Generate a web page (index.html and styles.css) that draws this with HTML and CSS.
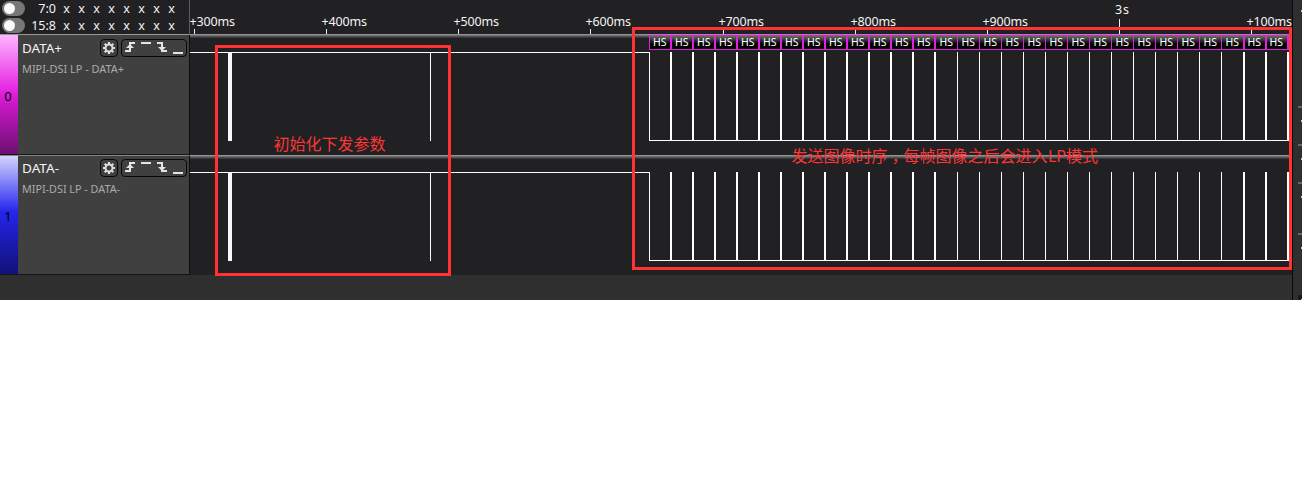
FILE: index.html
```
<!DOCTYPE html>
<html lang="zh">
<head>
<meta charset="utf-8">
<title>Logic analyzer</title>
<link rel="stylesheet" href="styles.css">
</head>
<body>
<svg class="defs" width="0" height="0">
  <defs>
    <g id="gear"><circle cx="6" cy="6" r="3.5" fill="none" stroke="#ddd" stroke-width="2"/><path d="M6 0v2M6 10v2M0 6h2M10 6h2M1.700 1.700l1.500 1.500M8.800 8.800l1.500 1.500M1.700 10.300l1.500-1.500M8.800 3.200l1.500-1.500" stroke="#ddd" stroke-width="2.200" fill="none"/></g>
    <g id="edges" fill="#e4e4e4"><path d="M7 2h6v2H9v8H3v-2h4z"/><path d="M4 8l4-4 4 4zM19 2h10v2H19z"/><path d="M35 2h6v8h4v2h-6V4h-4z"/><path d="M36 7h8l-4 4zM51 12h10v2H51z"/></g>
  </defs>
</svg>
<div class="app">
  <aside class="side">
    <div class="buses">
      <div class="bus"><i class="toggle"></i><span class="range">7:0</span><span class="bits"><b>x</b><b>x</b><b>x</b><b>x</b><b>x</b><b>x</b><b>x</b><b>x</b></span></div>
      <div class="bus"><i class="toggle"></i><span class="range">15:8</span><span class="bits"><b>x</b><b>x</b><b>x</b><b>x</b><b>x</b><b>x</b><b>x</b><b>x</b></span></div>
    </div>
    <div class="channel">
      <div class="index magenta">0</div>
      <div class="info">
        <div class="title"><svg class="name" width="78" height="18"><text x="0" y="14" textLength="40" lengthAdjust="spacingAndGlyphs">DATA+</text></svg><span class="btn gear"><svg width="12" height="12"><use href="#gear"/></svg></span><span class="btn trig"><svg width="64" height="16"><use href="#edges"/></svg></span></div>
        <svg class="sub" width="150" height="18"><text x="0" y="13.500" textLength="102" lengthAdjust="spacingAndGlyphs">MIPI-DSI LP - DATA+</text></svg>
      </div>
    </div>
    <div class="channel">
      <div class="index blue">1</div>
      <div class="info">
        <div class="title"><svg class="name" width="78" height="18"><text x="0" y="14" textLength="37" lengthAdjust="spacingAndGlyphs">DATA-</text></svg><span class="btn gear"><svg width="12" height="12"><use href="#gear"/></svg></span><span class="btn trig"><svg width="64" height="16"><use href="#edges"/></svg></span></div>
        <svg class="sub" width="150" height="18"><text x="0" y="13.500" textLength="98" lengthAdjust="spacingAndGlyphs">MIPI-DSI LP - DATA-</text></svg>
      </div>
    </div>
  </aside>
  <main class="scope">
    <svg id="plot" width="1102" height="275" viewBox="190 0 1102 275"></svg>
  </main>
  <aside class="rail">
    <svg width="9" height="300"><g fill="#666"><path d="M5 106h4v2H5zM5 144h4v2H5zM5 182h4v2H5zM5 233h4v2H5z"/></g><path d="M8 10h1v2H8zM8 120h1v2H8zM8 158h1v2H8zM8 196h1v2H8zM8 247h1v2H8z" fill="#ccc"/><path d="M5 295h4v5H5z" fill="#191919"/><path d="M8 299h1v1H8z" fill="#ddd"/></svg>
  </aside>
  <div class="mark init"><svg width="230" height="225"><text x="55.500" y="101.500" textLength="112">初始化下发参数</text></svg></div>
  <div class="mark video"><svg width="654" height="237"><text y="132"><tspan x="156.500">发送图像时序</tspan><tspan class="comma" x="252.500" y="137" lang="zh-TW">，</tspan><tspan x="268.500" y="132">每帧图像之后会进入</tspan><tspan x="413" textLength="18">LP</tspan><tspan x="431">模式</tspan></text></svg></div>
</div>
<script src="plot.js"></script>
</body>
</html>
```
FILE: styles.css
```
body { margin: 0; background: #fff; font-family: "Noto Sans", sans-serif; font-size: 12.5px; color: #f4f4f4; }
.defs { position: absolute; }
svg { display: block; }
.app { position: relative; display: grid; grid-template-columns: 190px 1102px 10px; width: 1302px; height: 300px; background: #2f2f2f; }
.side { height: 275px; background: #212123; }
.buses { border-right: 1px solid #5c5c5c; border-bottom: 1px solid #999; box-sizing: border-box; height: 35px; }
.bus { display: flex; align-items: center; height: 17px; line-height: 17px; }
.toggle { width: 23px; height: 15px; border-radius: 8px; background: #777; margin-left: 2px; box-sizing: border-box; padding: 2px; }
.toggle::before { content: ""; display: block; width: 11px; height: 11px; border-radius: 50%; background: #fafafa; }
.range { width: 31px; text-align: right; }
.bits { display: grid; grid-template-columns: repeat(8, 15px); margin-left: 3px; text-align: center; }
.bits b { font-weight: normal; font-size: 12.5px; }
.channel { display: flex; height: 120px; box-sizing: border-box; border-bottom: 1px solid #151515; border-right: 1px solid #0c0c0c; }
.channel + .channel { border-top: 1px solid #858585; }
.index { display: flex; align-items: center; justify-content: center; width: 18px; color: #000; font-size: 13px; padding: 2px 2px 0 0; box-sizing: border-box; }
.magenta { background: linear-gradient(#ffb4ff, #e424e2 47%, #d41ad2 53%, #6c0f70); }
.blue { background: linear-gradient(#d4d4ff, #2626ee 47%, #2222e0 53%, #111175); }
.info { flex: 1; background: #404040; padding: 4px 2px 0 4px; }
.channel + .channel .info { padding-top: 3px; }
.title { display: flex; }
.name text { fill: #f4f4f4; font-size: 12.5px; }
.sub { margin-top: 2px; }
.sub text { fill: #aaa; font-size: 11.5px; }
.btn { display: flex; align-items: center; justify-content: center; height: 18px; box-sizing: border-box; border: 1px solid #080808; border-radius: 4px; }
.gear { width: 18px; margin-right: 3px; }
.trig { width: 66px; }
.scope { height: 275px; background: #212123; }
.axis { fill: #f4f4f4; font-size: 12.5px; }
.hs { fill: #fff; font-size: 11px; }
.rail { border-left: 1px solid #080808; height: 300px; }
.mark { position: absolute; box-sizing: border-box; border: 3px solid #ff3333; }
.mark text { fill: #ff3535; font-family: "Noto Sans", "Noto Sans CJK SC", sans-serif; font-size: 16px; }
.mark .comma { font-family: "Noto Sans CJK TC", sans-serif; }
.init { left: 215px; top: 45px; width: 236px; height: 231px; }
.video { left: 632px; top: 27px; width: 660px; height: 243px; }
```
FILE: plot.js
```
const edges = [[649, 1]];
for (let i = 0; i < 29; i++) {
  const thin = i > 12 && i < 26;
  edges.push([670 + 22 * i + (i > 12 ? 1 : 0), thin ? 1 : 2]);
}
let out = '';
const rect = (x, y, w, h, c) => { out += `<rect x="${x}" y="${y}" width="${w}" height="${h}" fill="${c}"/>`; };

// time axis
[['+300ms', 190, 194], ['+400ms', 322, 326], ['+500ms', 454, 458], ['+600ms', 586, 590], ['+700ms', 719, 723],
 ['+800ms', 851, 855], ['+900ms', 983, 987], ['+100ms', 1247, 1251]].forEach(([label, x, tick]) => {
  out += `<text class="axis" x="${x - 0.5}" y="26" textLength="45.5">${label}</text>`;
  rect(tick, 29, 1, 5, '#eee');
});
out += '<text class="axis" x="1115" y="14" textLength="14">3s</text>';
rect(1119, 19, 1, 15, '#eee');

// channel traces
[34, 155].forEach(y => {
  ['#929294', '#707072', '#505052', '#38383a'].forEach((c, i) => rect(190, y + i, 1102, 1, c));
});
[52, 172].forEach(y => {
  rect(190, y, 460, 1, '#fff');
  rect(228, y, 4, 89, '#f8f8fa');
  rect(430, y, 1, 89, '#fff');
  rect(649, y + 88, 640, 1, '#fff');
  edges.forEach(([x, w]) => rect(x, y, w, 89, '#fff'));
});

// decoded packets
out += '<defs><linearGradient id="cell" x2="0" y2="1"><stop stop-color="#777"/><stop offset=".6" stop-color="#000"/></linearGradient></defs>';
rect(649, 35, 640, 15, 'url(#cell)');
rect(649, 35, 640, 1, '#df20df');
rect(649, 49, 640, 1, '#df20df');
edges.forEach(([x, w], i) => {
  rect(x, 35, w, 15, '#df20df');
  if (i < edges.length - 1) out += `<text class="hs" x="${653 + 22 * i + (i > 12 ? 0.5 : 0)}" y="46" textLength="13.5" lengthAdjust="spacingAndGlyphs">HS</text>`;
});
document.getElementById('plot').innerHTML = out;
```
